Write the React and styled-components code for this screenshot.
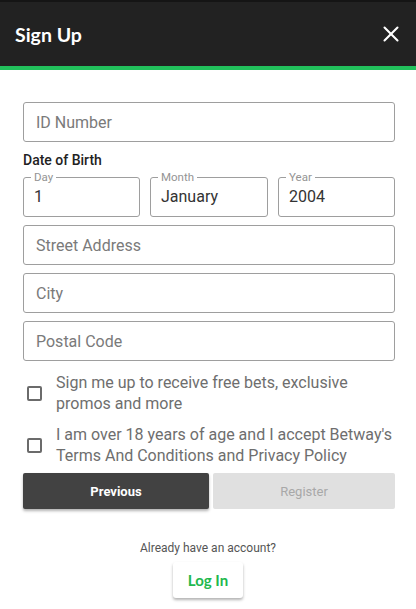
import React from 'react'
import styled, { createGlobalStyle } from 'styled-components'
import { X } from 'lucide-react'

const GlobalStyle = createGlobalStyle`
  * { box-sizing: border-box; }
  body {
    margin: 0;
    background: #fff;
    font-family: Roboto, "Liberation Sans", sans-serif;
  }
`

const App = () => {
  return (
    <>
      <GlobalStyle />
      <Modal>
        <Header>
          <Title>Sign Up</Title>
          <Close aria-label="close">
            <X size={26} strokeWidth={1.9} />
          </Close>
        </Header>
        <Form>
          <TextInput placeholder="ID Number" />
          <Label>Date of Birth</Label>
          <DateRow>
            <DateField>
              <Legend>Day</Legend>
              <Value>1</Value>
            </DateField>
            <DateField>
              <Legend>Month</Legend>
              <Value>January</Value>
            </DateField>
            <DateField>
              <Legend>Year</Legend>
              <Value>2004</Value>
            </DateField>
          </DateRow>
          <TextInput placeholder="Street Address" />
          <TextInput placeholder="City" />
          <TextInput placeholder="Postal Code" />

          <Checks>
            <Check>
              <Box />
              <CheckText>Sign me up to receive free bets, exclusive promos and more</CheckText>
            </Check>
            <Check>
              <Box />
              <CheckText>I am over 18 years of age and I accept Betway's Terms And Conditions and Privacy Policy</CheckText>
            </Check>
          </Checks>

          <Buttons>
            <Button dark>Previous</Button>
            <Button>Register</Button>
          </Buttons>
        </Form>
        <Footer>
          <Already>Already have an account?</Already>
          <LogIn>Log In</LogIn>
        </Footer>
      </Modal>
    </>
  )
}

export default App

const Modal = styled.div`
  width: 416px;
  min-height: 609px;
  background: #fff;
  display: flex;
  flex-direction: column;
`
const Header = styled.div`
  flex: none;
  height: 70px;
  background: #222222;
  border-top: 2px solid #151515;
  border-bottom: 4px solid #22c15c;
  display: flex;
  align-items: center;
  justify-content: space-between;
  padding: 0 12px 0 15px;
`
const Title = styled.h1`
  margin: 0;
  color: #fff;
  font-family: Lato, "Open Sans", sans-serif;
  font-weight: 700;
  font-size: 19.5px;
`
const Close = styled.button`
  background: none;
  border: none;
  padding: 0;
  color: #fff;
  display: flex;
`
const Form = styled.div`
  padding: 32px 21px 0 23px;
  display: flex;
  flex-direction: column;
`
const TextInput = styled.input`
  flex: none;
  height: 40px;
  width: 100%;
  border: 1px solid #9e9e9e;
  border-radius: 3px;
  padding: 0 12px;
  font-family: Roboto, sans-serif;
  font-size: 16px;
  color: #333;
  margin-bottom: 8px;
  outline: none;
  &::placeholder { color: #7a7a7a; }
`
const Label = styled.div`
  margin-top: 0;
  font-size: 14px;
  font-weight: 500;
  color: #222;
  line-height: 20px;
`
const DateRow = styled.div`
  display: grid;
  grid-template-columns: 117px 118px 117px;
  justify-content: space-between;
  margin-top: 1px;
  margin-bottom: 8px;
`
const DateField = styled.fieldset`
  margin: 0;
  height: 46px;
  border: 1px solid #9e9e9e;
  border-radius: 3px;
  padding: 0 10px 0 10px;
`
const Legend = styled.legend`
  font-size: 11.5px;
  color: #949494;
  padding: 0 3px;
  margin-left: -3px;
  line-height: 12px;
`
const Value = styled.div`
  font-size: 16px;
  color: #333;
  line-height: 20px;
  margin-top: 4px;
`
const Checks = styled.div`
  margin-top: 3px;
  display: flex;
  flex-direction: column;
  gap: 10px;
`
const Check = styled.label`
  display: flex;
  align-items: center;
  gap: 14px;
  padding-left: 4px;
`
const Box = styled.span`
  flex: none;
  width: 15px;
  height: 15px;
  border: 2px solid #6b6b6b;
  border-radius: 2px;
`
const CheckText = styled.span`
  font-size: 16px;
  line-height: 21px;
  color: #6e6e6e;
`
const Buttons = styled.div`
  margin-top: 7px;
  display: grid;
  grid-template-columns: 186px 1fr;
  gap: 4px;
`
const Button = styled.button`
  height: 36px;
  border: none;
  border-radius: 2px;
  font-family: Roboto, sans-serif;
  font-size: 13px;
  font-weight: ${p => (p.dark ? 700 : 400)};
  background: ${p => (p.dark ? '#424242' : '#e0e0e0')};
  color: ${p => (p.dark ? '#fff' : '#a8a8a8')};
  box-shadow: ${p => (p.dark ? '0 2px 3px rgba(0,0,0,0.3)' : 'none')};
`
const Footer = styled.div`
  display: flex;
  flex-direction: column;
  align-items: center;
  margin-top: 31px;
`
const Already = styled.div`
  font-size: 12px;
  color: #555;
  line-height: 16px;
`
const LogIn = styled.button`
  margin-top: 6px;
  width: 70px;
  height: 36px;
  background: #fff;
  border: none;
  border-radius: 3px;
  box-shadow: 0 2px 3px rgba(0,0,0,0.3);
  color: #22b84d;
  font-family: Lato, "Open Sans", sans-serif;
  font-weight: 700;
  font-size: 15px;
`
